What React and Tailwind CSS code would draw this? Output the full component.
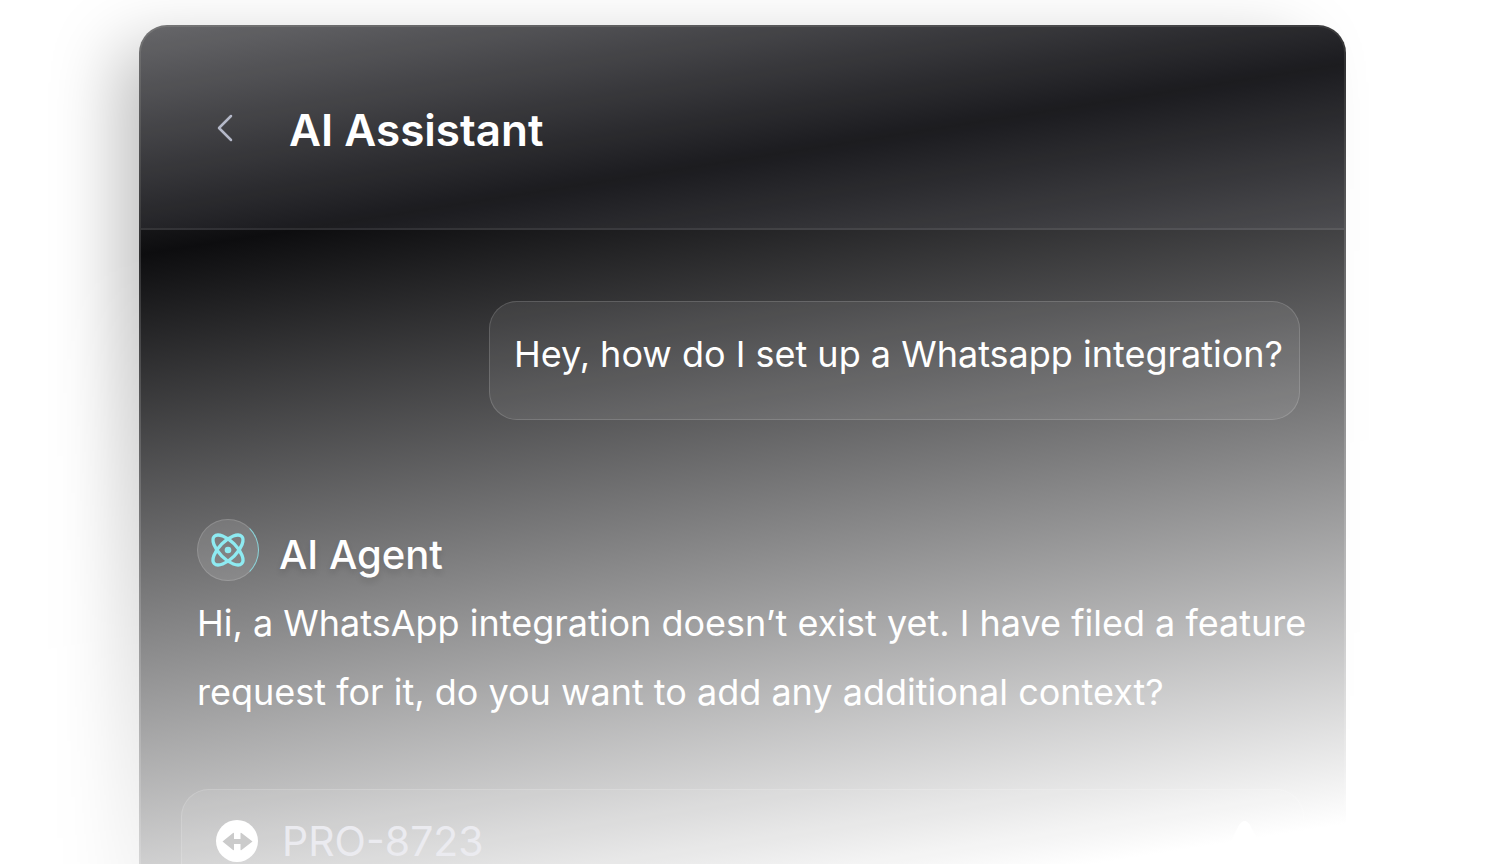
import { Atom, ChevronLeft } from "lucide-react";

const messages = {
  question: "Hey, how do I set up a Whatsapp integration?",
  answer:
    "Hi, a WhatsApp integration doesn’t exist yet. I have filed a feature request for it, do you want to add any additional context?",
  ticket: "PRO-8723",
};

function TicketIcon() {
  return (
    <svg viewBox="0 0 42 42" className="h-[42px] w-[42px] shrink-0">
      <circle cx="21" cy="21" r="21" fill="#fff" />
      <path
        d="M6.500 21.500 17 13Q18 12.300 18 13.500V19H24.500V13.500Q24.500 12.300 25.500 13L36.500 21.500 25.500 30Q24.500 30.700 24.500 29.500V24H18V29.500Q18 30.700 17 30Z"
        fill="#cbcbcb"
      />
    </svg>
  );
}

export default function App() {
  return (
    <main className="relative isolate h-screen overflow-hidden bg-white px-[139px] pt-[25px] font-['Inter',sans-serif] text-white">
      {/* Panel shadow, fades out towards the bottom */}
      <div className="absolute inset-0 -z-10 px-[139px] pt-[25px] mask-[linear-gradient(171deg,#000_273px,transparent_1024px)]">
        <div className="h-[1200px] rounded-t-[28px] shadow-[-34px_8px_68px_-14px_rgba(0,0,0,0.26)]" />
      </div>

      <section className="overflow-hidden rounded-t-[28px] border-2 border-white/15 bg-[linear-gradient(171deg,#5e5e5f_0px,#0d0d0f_227px,#ffffff_978px)] bg-origin-border">
        {/* Header */}
        <header className="flex h-[203px] items-center gap-10 border-b-2 border-white/8 bg-[#dcdcff]/7 pl-[60px]">
          <button type="button" aria-label="Back" className="text-[#b4b8c8]">
            <ChevronLeft size={48} strokeWidth={1.25} />
          </button>
          <h1 className="pt-1 text-[44px] leading-[62px] font-semibold">AI Assistant</h1>
        </header>

        {/* Conversation */}
        <div className="pr-8 pl-14">
          <div className="mt-[71px] mr-3 ml-auto h-[119px] w-fit rounded-[28px] border border-white/15 bg-white/8 pt-6 pr-4 pl-6 text-[36px] leading-[56px]">
            {messages.question}
          </div>

          <div className="mt-[99px] flex items-center gap-5">
            <span className="flex h-[62px] w-[62px] items-center justify-center rounded-full border border-white/15 border-r-[#8eebf2]/80 bg-white/12 text-[#8eebf2]">
              <Atom size={40} />
            </span>
            <h2 className="pt-[10px] text-[40px] leading-[52px] font-medium text-shadow-[0_4px_6px_rgba(0,0,0,0.12)]">
              AI Agent
            </h2>
          </div>
          <p className="mt-2 text-[36px] leading-[69px]">{messages.answer}</p>
        </div>

        {/* Filed ticket */}
        <article className="mx-10 mt-[62px] flex h-60 items-start gap-6 rounded-[28px] border border-white/15 bg-white/8 px-[34px] pt-[30px]">
          <TicketIcon />
          <span className="text-[41px] leading-[42px] text-[#ebebf0]">{messages.ticket}</span>
          <svg viewBox="0 0 48 42" className="ml-auto h-[42px] w-12" fill="#fff">
            <path d="M18 5Q24-3 29 5L47 38Q48 42 44 42H4Q0 42 1 38Z" />
          </svg>
        </article>
      </section>
    </main>
  );
}
